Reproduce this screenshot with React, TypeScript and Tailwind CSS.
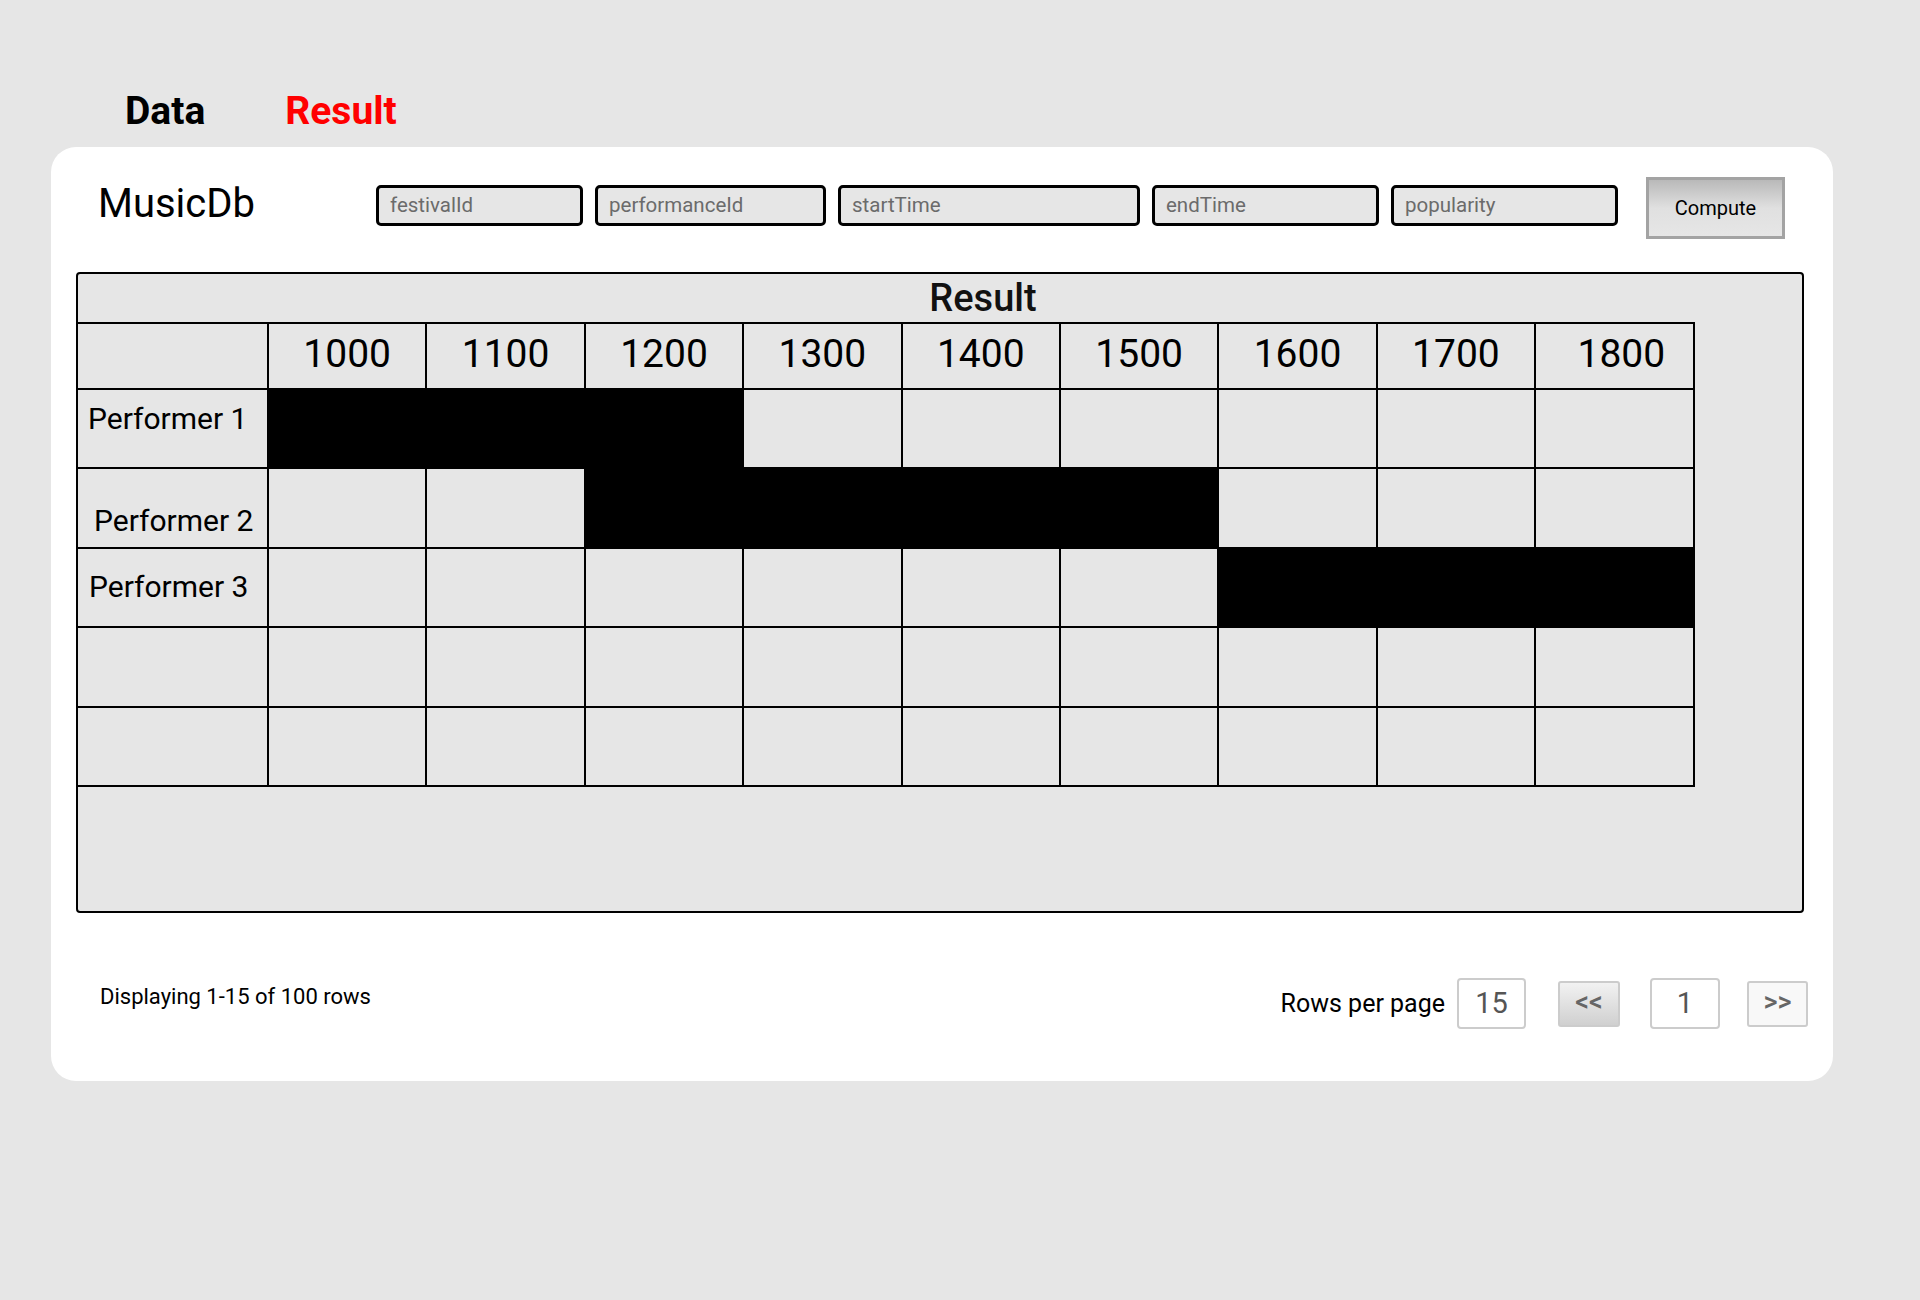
import React from "react";

const hours = ["1000", "1100", "1200", "1300", "1400", "1500", "1600", "1700", "1800"];

const rows: { label: string; filled: number[]; align: string }[] = [
  { label: "Performer 1", filled: [0, 1, 2], align: "items-start pt-[12px] pl-[10px]" },
  { label: "Performer 2", filled: [2, 3, 4, 5], align: "items-end pb-[9px] pl-[16px]" },
  { label: "Performer 3", filled: [6, 7, 8], align: "items-center pl-[11px]" },
  { label: "", filled: [], align: "" },
  { label: "", filled: [], align: "" },
];

const inputs = [
  { ph: "festivalId", w: "w-[207px]" },
  { ph: "performanceId", w: "w-[231px]" },
  { ph: "startTime", w: "w-[302px]" },
  { ph: "endTime", w: "w-[227px]" },
  { ph: "popularity", w: "w-[227px]" },
];

export default function App() {
  return (
    <div
      className="min-h-[1300px] w-[1920px] bg-[#e6e6e6] text-black"
      style={{ fontFamily: "Roboto, 'Liberation Sans', sans-serif" }}
    >
      {/* Tabs */}
      <div className="flex h-[147px] items-end pb-[14px] pl-[125px]">
        <div className="flex items-center gap-[80px] text-[39px] leading-[44px] font-bold">
          <span>Data</span>
          <span className="text-[#ff0000]">Result</span>
        </div>
      </div>

      {/* Card */}
      <div className="ml-[51px] flex h-[934px] w-[1782px] flex-col rounded-[25px] bg-white">
        {/* Header */}
        <div className="mt-[30px] flex h-[62px] items-center">
          <div className="ml-[47px] w-[278px] pb-[8px] text-[40px] font-normal leading-[44px]">MusicDb</div>
          <div className="mb-[5px] flex items-center gap-[12px]">
            {inputs.map((inp) => (
              <div
                key={inp.ph}
                className={`${inp.w} flex h-[41px] items-center rounded-[5px] border-[3px] border-black bg-[#e6e6e6] pl-[11px] text-[20.5px] text-[#6b6b6b]`}
              >
                {inp.ph}
              </div>
            ))}
          </div>
          <button className="ml-[28px] flex h-[62px] w-[139px] items-center justify-center border-[3px] border-[#a3a3a3] bg-gradient-to-b from-[#b9b9b9] via-[#e0e0e0] to-[#e6e6e6] text-[20px] text-black">
            Compute
          </button>
        </div>

        {/* Result panel */}
        <div className="ml-[25px] mt-[33px] flex h-[641px] w-[1728px] flex-col rounded-[4px] border-2 border-black bg-[#e6e6e6]">
          <div className="flex h-[48px] items-center justify-center pl-[86px] text-[38px] font-medium leading-[40px] text-[#111111]">
            Result
          </div>
          <div className="grid w-[1617px] grid-cols-[191px_repeat(9,158.4px)] grid-rows-[66px_repeat(5,79.4px)] border-t-2 border-black">
            <div className="border-b-2 border-r-2 border-black" />
            {hours.map((h, i) => (
              <div
                key={h}
                className={`flex items-center justify-center border-b-2 border-r-2 border-black pb-[4px] text-[39px] leading-none ${i === 8 ? "pl-[14px]" : ""}`}
              >
                {h}
              </div>
            ))}
            {rows.map((r, ri) => (
              <React.Fragment key={ri}>
                <div className={`flex border-b-2 border-r-2 border-black text-[30px] leading-[34px] ${r.align}`}>
                  {r.label}
                </div>
                {hours.map((h, ci) => (
                  <div
                    key={h}
                    className={`border-b-2 border-r-2 border-black ${r.filled.includes(ci) ? "bg-black" : ""}`}
                  />
                ))}
              </React.Fragment>
            ))}
          </div>
        </div>

        {/* Footer */}
        <div className="mt-[65px] flex h-[51px] items-center pr-[25px]">
          <div className="ml-[49px] mb-[14px] text-[22px]">Displaying 1-15 of 100 rows</div>
          <div className="ml-auto flex items-center">
            <span className="mr-[12px] text-[25px]">Rows per page</span>
            <div className="flex h-[51px] w-[69px] items-center justify-center rounded-[4px] border-2 border-[#cccccc] bg-white text-[29px] text-[#555555]">
              15
            </div>
            <button className="ml-[32px] flex h-[46px] w-[62px] items-center justify-center rounded-[3px] border-2 border-[#cccccc] bg-gradient-to-b from-[#f2f2f2] to-[#d0d0d0] pb-[2px] text-[27px] font-medium leading-none text-[#666666]">
              &lt;&lt;
            </button>
            <div className="ml-[30px] flex h-[51px] w-[70px] items-center justify-center rounded-[4px] border-2 border-[#cccccc] bg-white text-[29px] text-[#555555]">
              1
            </div>
            <button className="ml-[27px] flex h-[46px] w-[61px] items-center justify-center rounded-[3px] border-2 border-[#cccccc] bg-[#f8f8f8] pb-[2px] text-[27px] font-medium leading-none text-[#666666]">
              &gt;&gt;
            </button>
          </div>
        </div>
      </div>
    </div>
  );
}
